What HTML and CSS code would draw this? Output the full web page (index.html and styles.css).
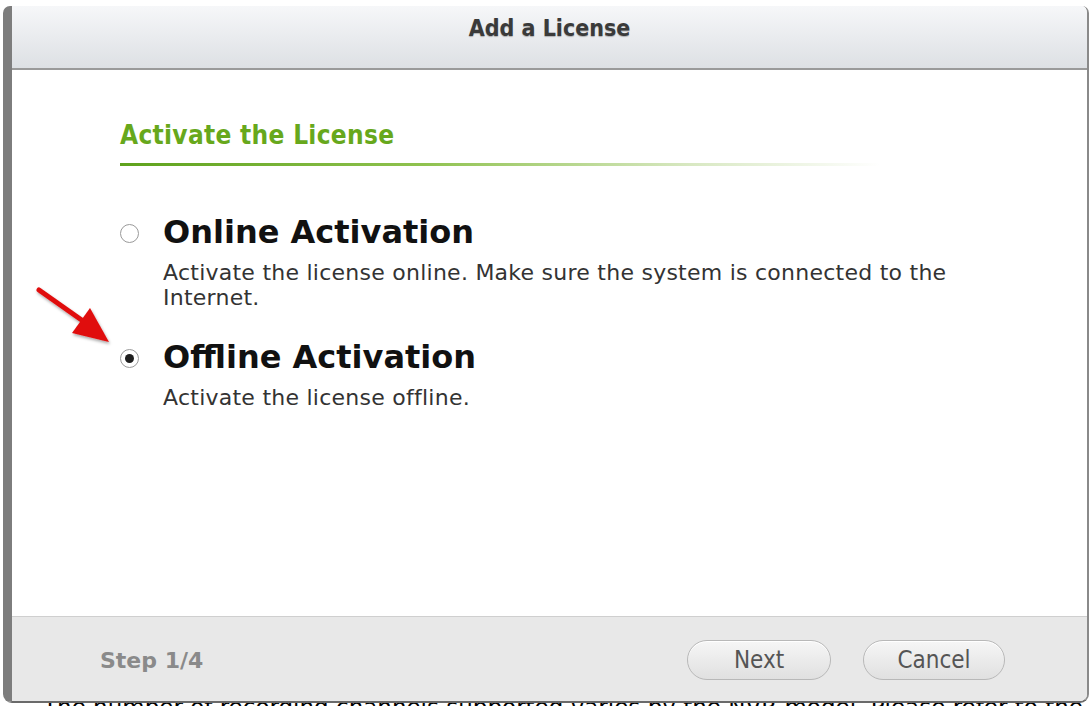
FILE: index.html
```html
<!DOCTYPE html>
<html>
<head>
    <meta charset="UTF-8">
    <title>Add a License</title>
    <link rel="stylesheet" href="styles.css">
</head>
<body>
<div class="page">
    <div class="dialog">
        <div class="dialog-head">Add a License</div>
        <div class="dialog-body">
            <h2 class="section-title">Activate the License</h2>
            <div class="section-rule"></div>

            <label class="option">
                <span class="radio"></span>
                <span class="option-text">
                    <span class="option-name">Online Activation</span>
                    <span class="option-desc">Activate the license online. Make sure the system is connected to the Internet.</span>
                </span>
            </label>

            <label class="option">
                <span class="radio checked"></span>
                <span class="option-text">
                    <span class="option-name">Offline Activation</span>
                    <span class="option-desc">Activate the license offline.</span>
                </span>
            </label>

            <svg class="pointer" width="90" height="70" viewBox="0 0 90 70">
                <defs>
                    <filter id="soft" x="-20%" y="-20%" width="150%" height="150%">
                        <feDropShadow dx="1" dy="2" stdDeviation="1.5" flood-color="#000" flood-opacity="0.35"/>
                    </filter>
                </defs>
                <g filter="url(#soft)">
                    <line x1="6" y1="6" x2="50" y2="37" stroke="#e01010" stroke-width="5" stroke-linecap="round"/>
                    <polygon points="39,49 57,24 76,58" fill="#e01010"/>
                </g>
            </svg>
        </div>
        <div class="dialog-foot">
            <span class="step">Step 1/4</span>
            <div class="actions">
                <button class="btn">Next</button>
                <button class="btn">Cancel</button>
            </div>
        </div>
    </div>
    <p class="under">The number of recording channels supported varies by the NVR model. Please refer to the</p>
</div>
</body>
</html>
```

FILE: styles.css
```css
html, body {
    margin: 0;
    padding: 0;
}

body {
    height: 706px;
    overflow: hidden;
    background: #fff;
    font-family: "DejaVu Sans", Verdana, sans-serif;
}

.page {
    padding: 6px 3px 0 3px;
}

.dialog {
    position: relative;
    box-sizing: border-box;
    width: 1086px;
    height: 697px;
    display: flex;
    flex-direction: column;
    border-left: 9px solid #7d7d7d;
    border-right: 2px solid #8a8a8a;
    border-bottom: 2px solid #6a6a6a;
    border-radius: 7px 7px 9px 9px;
    overflow: hidden;
    background: #fff;
}

.dialog-head {
    height: 62px;
    line-height: 44px;
    text-align: center;
    font-family: "DejaVu Sans Condensed", "DejaVu Sans", sans-serif;
    font-weight: bold;
    font-size: 23px;
    color: #3a3a3a;
    text-shadow: 0 1px 1px rgba(0, 0, 0, 0.25);
    background: linear-gradient(#f6f7f9, #dde0e4);
    border-bottom: 2px solid #9a9a9a;
}

.dialog-body {
    position: relative;
    flex: 1;
    padding: 50px 0 0 108px;
}

.section-title {
    margin: 0;
    font-family: "DejaVu Sans Condensed", "DejaVu Sans", sans-serif;
    font-weight: bold;
    font-size: 26px;
    line-height: 30px;
    color: #67a81c;
    letter-spacing: 0.3px;
}

.section-rule {
    width: 760px;
    height: 3px;
    margin-top: 13px;
    background: linear-gradient(to right, #5ea21c, #8fc24f 40%, #d8e8c2 75%, rgba(255, 255, 255, 0));
}

.option {
    display: flex;
    align-items: flex-start;
    margin-top: 47px;
}

.option + .option {
    margin-top: 28px;
}

.radio {
    box-sizing: border-box;
    width: 19px;
    height: 19px;
    margin-top: 11px;
    border: 1.5px solid #9a9a9a;
    border-radius: 50%;
    background: #fff;
    display: flex;
    align-items: center;
    justify-content: center;
}

.radio.checked::after {
    content: "";
    width: 9px;
    height: 9px;
    border-radius: 50%;
    background: #1e1e1e;
}

.option-text {
    display: flex;
    flex-direction: column;
    margin-left: 24px;
}

.option-name {
    font-weight: bold;
    font-size: 32px;
    line-height: 38px;
    color: #111;
}

.option-desc {
    width: 800px;
    margin-top: 9px;
    font-size: 22px;
    line-height: 25px;
    letter-spacing: 0.25px;
    color: #333;
}

.pointer {
    position: absolute;
    left: 21px;
    top: 214px;
}

.dialog-foot {
    height: 82px;
    display: flex;
    align-items: center;
    justify-content: space-between;
    padding: 2px 82px 0 88px;
    background: #e8e8e8;
    border-top: 1px solid #cfcfcf;
}

.step {
    font-weight: bold;
    font-size: 22px;
    color: #8a8a8a;
}

.actions {
    display: flex;
    gap: 32px;
}

.btn {
    width: 144px;
    height: 40px;
    border: 1px solid #b8b8b8;
    border-radius: 20px;
    background: linear-gradient(#f6f6f6, #e0e0e0);
    box-shadow: inset 0 1px 0 #fff;
    font-family: "DejaVu Sans Condensed", "DejaVu Sans", sans-serif;
    font-size: 24px;
    color: #555;
}

.btn + .btn {
    width: 142px;
}

.under {
    margin: -9px 0 0 40px;
    font-size: 23px;
    line-height: 26px;
    color: #000;
    white-space: nowrap;
}
```
